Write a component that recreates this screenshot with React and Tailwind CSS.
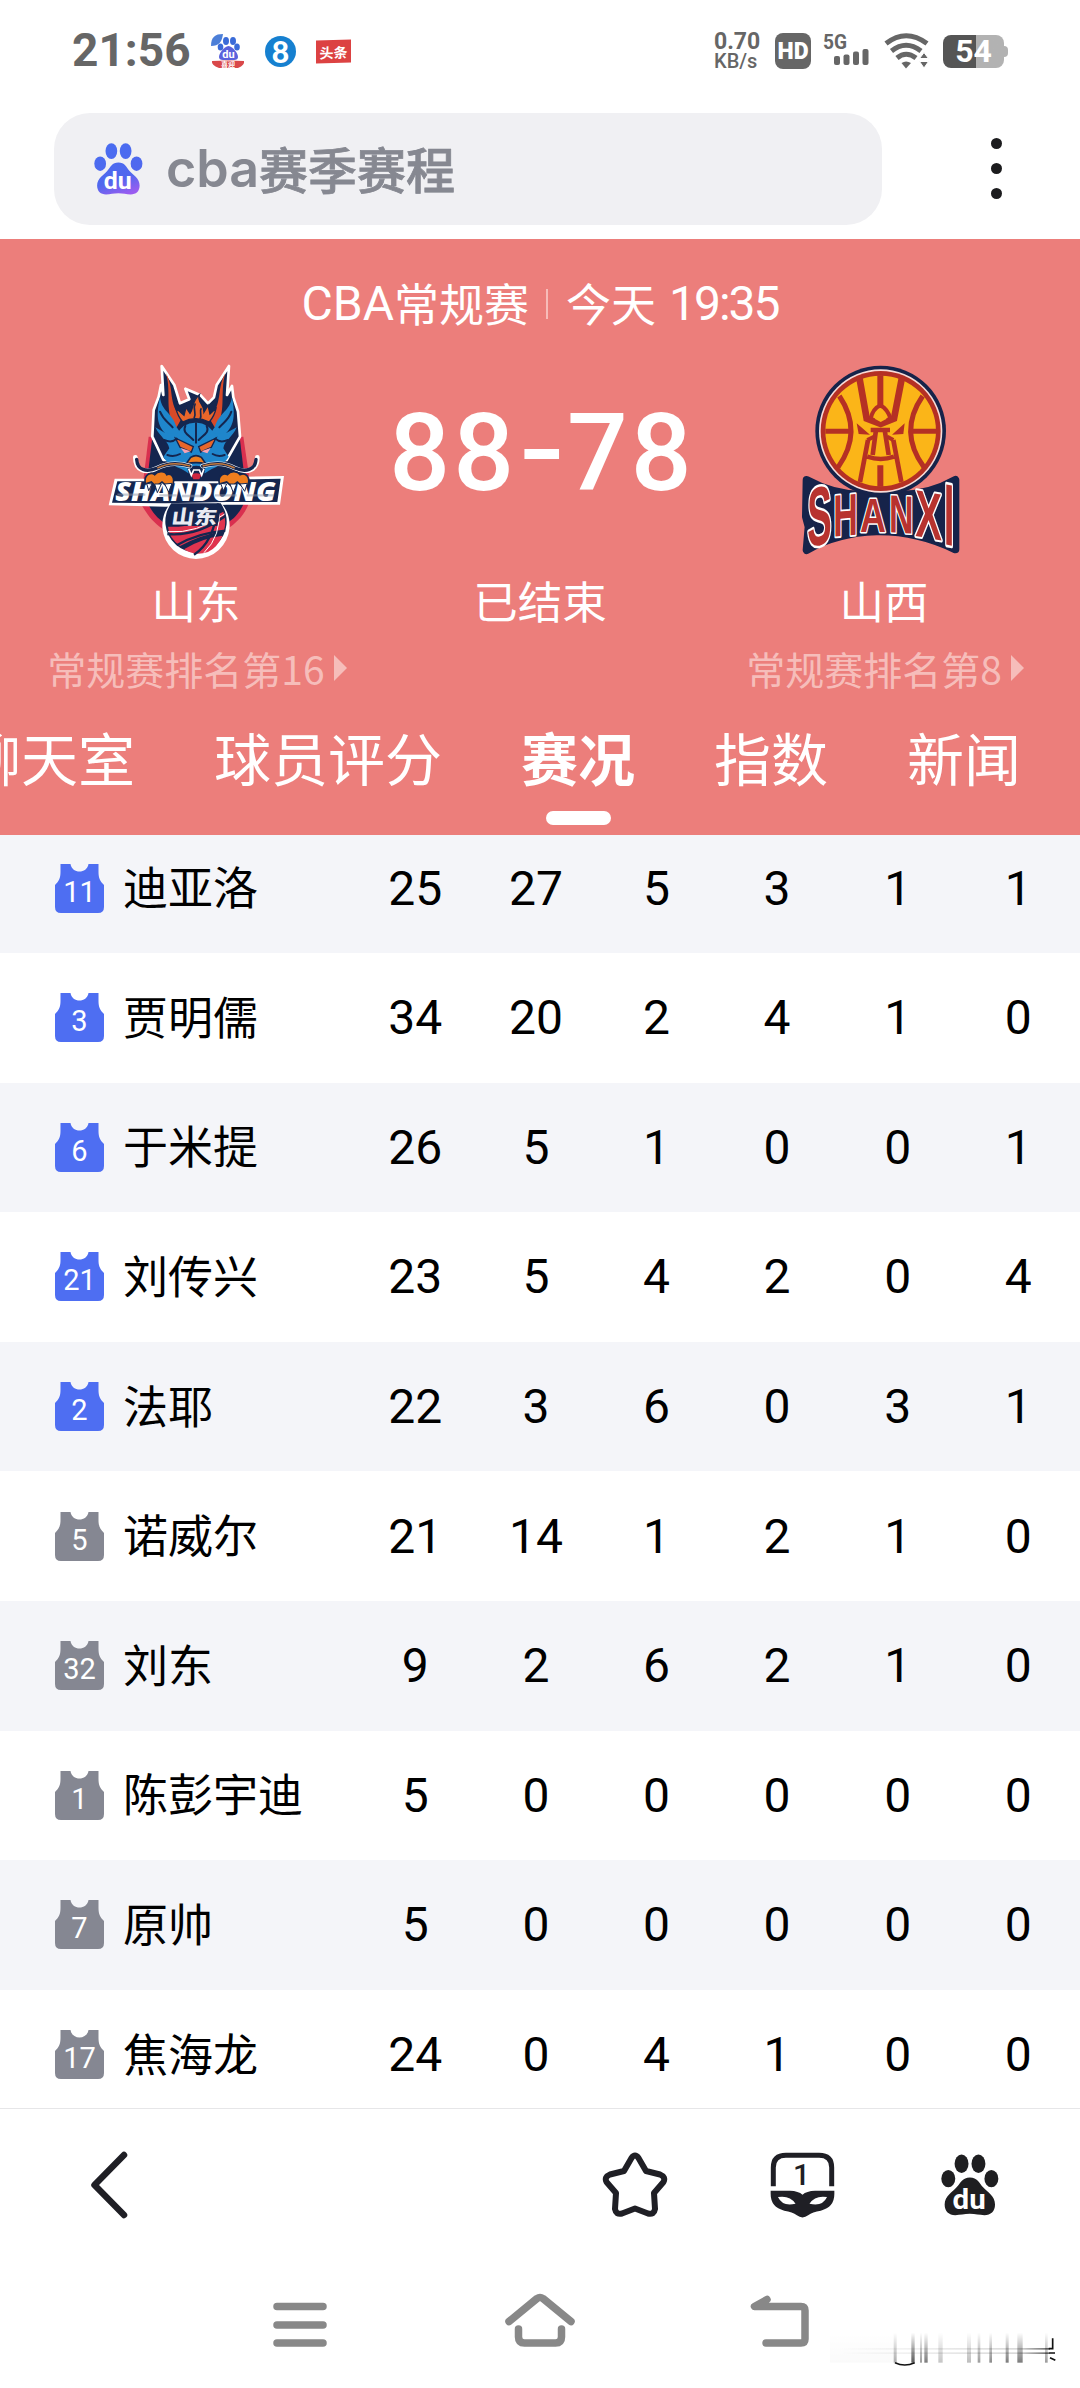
const players = [
	{ number: 11, name: "迪亚洛", starter: true, stats: [25, 27, 5, 3, 1, 1] },
	{ number: 3, name: "贾明儒", starter: true, stats: [34, 20, 2, 4, 1, 0] },
	{ number: 6, name: "于米提", starter: true, stats: [26, 5, 1, 0, 0, 1] },
	{ number: 21, name: "刘传兴", starter: true, stats: [23, 5, 4, 2, 0, 4] },
	{ number: 2, name: "法耶", starter: true, stats: [22, 3, 6, 0, 3, 1] },
	{ number: 5, name: "诺威尔", starter: false, stats: [21, 14, 1, 2, 1, 0] },
	{ number: 32, name: "刘东", starter: false, stats: [9, 2, 6, 2, 1, 0] },
	{ number: 1, name: "陈彭宇迪", starter: false, stats: [5, 0, 0, 0, 0, 0] },
	{ number: 7, name: "原帅", starter: false, stats: [5, 0, 0, 0, 0, 0] },
	{ number: 17, name: "焦海龙", starter: false, stats: [24, 0, 4, 1, 0, 0] },
];

const tabs = ["聊天室", "球员评分", "赛况", "指数", "新闻"];

const Paw = ({ className, fill, textFill }) => (
	<svg className={className} viewBox="545 42 175 186" fill={fill}>
		<defs>
			<linearGradient id="paw" gradientUnits="userSpaceOnUse" x1="600" y1="60" x2="660" y2="226">
				<stop offset="0" stopColor="#4a6cf0" />
				<stop offset="0.65" stopColor="#5068ee" />
				<stop offset="1" stopColor="#9a5cf0" />
			</linearGradient>
		</defs>
		<ellipse cx="607" cy="71" rx="21" ry="28" />
		<ellipse cx="658" cy="71" rx="21" ry="28" />
		<ellipse cx="567" cy="116" rx="21" ry="26" />
		<ellipse cx="697" cy="116" rx="21" ry="26" />
		<path d="M632 112C655 112 660 128 672 142C685 157 708 168 708 194C708 215 695 226 676 226C660 226 650 222 632 222C614 222 604 226 588 226C569 226 556 215 556 194C556 168 580 157 592 142C604 128 610 112 632 112Z" />
		<text x="630" y="207" fontSize="86" fontWeight="700" textAnchor="middle" textLength="100" lengthAdjust="spacingAndGlyphs" fill={textFill} fontFamily="Roboto, sans-serif">du</text>
	</svg>
);

const ShandongLogo = () => (
	<svg className="mr-1 h-[240px] w-[230px]" viewBox="0 0 690 720">
		<path d="M206 290H490L506 400L512 470C500 520 475 545 440 568H250C215 545 195 515 182 488L190 420Z" fill="#d9304f" />
		<path d="M216 300H480L492 400L496 480C480 520 460 540 430 555H262C230 535 210 510 200 480L204 400Z" fill="#14264f" />
		{/* mane */}
		<path d="M245 78L283 135L300 190L328 178L316 146L362 166L384 190L402 172L410 135L447 78L441 165L456 138L460 172L474 215L480 290L440 360H250L217 290L221 210L236 170L243 135L250 165Z" fill="#14264f" stroke="#fff" strokeWidth="8" strokeLinejoin="round" />
		<path d="M258 100C285 150 262 190 305 235L290 262C250 225 276 160 258 100Z" fill="#d84a28" />
		<path d="M436 100C408 150 430 190 388 235L404 262C442 225 418 160 436 100Z" fill="#d84a28" />
		<path d="M240 170C244 215 276 215 290 262L310 290L262 286C234 260 226 235 240 170Z" fill="#1f86cc" />
		<path d="M456 170C450 215 418 215 404 262L384 290L432 286C460 260 468 235 456 170Z" fill="#1f86cc" />
		<path d="M226 262C240 292 262 300 268 325L250 350C262 378 300 378 325 400H375C402 378 432 378 446 350L430 325C434 300 458 292 470 262L440 278L405 282Q380 246 348 248Q312 246 290 282L254 278Z" fill="#1f86cc" />
		<path d="M288 205C292 226 300 236 308 246Q346 226 388 246C396 236 404 226 408 205L390 222L384 196L372 216C372 190 350 188 358 164C336 182 342 202 330 220L318 202L312 226Z" fill="#e8662a" stroke="#14264f" strokeWidth="4" />
		<path d="M346 190C336 208 352 216 342 236M364 205C356 216 368 224 360 238" fill="none" stroke="#14264f" strokeWidth="5" />
		<path d="M348 250V308M316 258C306 278 326 285 340 300M380 258C390 278 370 285 356 300M240 215C250 240 262 244 278 262M454 215C446 240 434 244 418 262M252 300Q276 310 290 296M444 300Q420 310 406 296M262 345Q282 352 300 342M434 345Q414 352 398 342" fill="none" stroke="#14264f" strokeWidth="6" strokeLinecap="round" />
		<path d="M286 294L340 320L334 336L300 322ZM408 294L356 320L362 336L394 322Z" fill="#e8662a" stroke="#14264f" strokeWidth="4" />
		<path d="M302 324L332 334L314 340ZM392 324L364 334L382 340Z" fill="#f6a3b4" />
		<path d="M332 352Q348 342 364 352L378 372Q348 364 318 372Z" fill="#ee7d1e" stroke="#14264f" strokeWidth="5" />
		<path d="M322 382Q348 372 376 382L370 422H330Z" fill="#14264f" />
		<path d="M334 404Q349 396 364 404L358 418H340Z" fill="#cf2740" />
		<path d="M326 386L334 406L341 390H358L365 406L372 386" fill="none" stroke="#fff" strokeWidth="5" />
		{/* whiskers */}
		<path d="M166 352C166 392 196 402 232 384C270 366 300 370 330 378M532 352C532 392 500 402 464 384C428 366 398 370 368 378" fill="none" stroke="#fff" strokeWidth="14" strokeLinecap="round" />
		<path d="M170 358C172 390 198 398 232 384C270 366 300 370 330 378M528 358C526 390 498 398 464 384C428 366 398 370 368 378" fill="none" stroke="#14264f" strokeWidth="10" strokeLinecap="round" />
		<path d="M232 384C270 366 300 370 330 378M464 384C428 366 398 370 368 378" fill="none" stroke="#c67a3c" strokeWidth="5" />
		{/* wordmark */}
		<path d="M104 416H202L230 424H470L500 410L612 408L600 494H440L256 500L86 496Z" fill="#fff" />
		<path d="M112 424H200L230 430H470L502 418L602 416L592 486H440L256 490L96 488Z" fill="#14264f" />
		<text x="347" y="483" textAnchor="middle" textLength="482" lengthAdjust="spacingAndGlyphs" fontSize="77" fontStyle="italic" fontWeight="800" fill="#fff" fontFamily="Open Sans, sans-serif">SHANDONG</text>
		<path d="M112 464H196M238 466H290M306 468H370M405 466H470M500 466H582" stroke="#8f96a8" strokeWidth="7" opacity="0.5" />
		<g fill="#ee7d1e" stroke="#14264f" strokeWidth="5">
			<path d="M196 432C190 400 216 396 224 404C234 390 258 394 260 404C276 398 286 414 278 436L262 440L246 426L228 440L214 426Z" />
			<path d="M418 432C412 404 434 398 442 404C452 390 474 394 480 404C498 396 512 412 504 436L488 440L472 426L456 440L440 426Z" />
		</g>
		<path d="M200 430L206 452L216 432ZM224 432L232 458L244 432ZM254 432L266 456L276 430ZM422 430L430 452L440 432ZM450 432L460 458L470 432ZM480 432L494 454L502 430Z" fill="#fff" stroke="#14264f" strokeWidth="3" />
		{/* ball */}
		<path d="M268 494A101 101 0 1 0 428 494Z" fill="#fff" />
		<path d="M274 490A92 92 0 1 0 422 490Z" fill="#14264f" />
		<path d="M264 560Q340 565 430 515Q440 545 432 572Q360 585 300 618Q266 592 264 560Z" fill="#e0344f" />
		<path d="M312 628Q365 594 428 587Q412 622 384 636Q345 650 312 628Z" fill="#e0344f" />
		<path d="M262 582Q350 590 436 528M290 616Q356 578 436 572M342 644Q405 604 414 490" fill="none" stroke="#14264f" strokeWidth="7" />
		<path d="M264 575Q350 582 434 522M418 500Q424 590 372 638" fill="none" stroke="#fff" strokeWidth="3" />
		<path d="M272 498H424L412 558H264Z" fill="#14264f" />
		<text x="342" y="551" textAnchor="middle" textLength="136" lengthAdjust="spacingAndGlyphs" fontSize="58" fontWeight="900" fill="#e9ebf2" transform="skewX(-8) translate(76 0)" fontFamily="Noto Sans CJK SC, sans-serif">山东</text>
	</svg>
);

const ShanxiLogo = () => (
	<svg className="h-[240px] w-[230px]" viewBox="0 0 690 720">
		<path d="M110 420Q220 480 332 458Q450 480 556 420V628Q440 572 320 574Q200 578 110 630L116 560L108 530Z" fill="#16234a" stroke="#16234a" strokeWidth="24" strokeLinejoin="round" />
		<circle cx="332" cy="273" r="196" fill="#16234a" />
		<circle cx="332" cy="273" r="185" fill="#f8dcd8" />
		<circle cx="332" cy="273" r="180" fill="#b53024" />
		<circle cx="332" cy="273" r="166" fill="#fbb518" />
		<g fill="none" stroke="#b53024" strokeWidth="15">
			<path d="M208 168Q280 275 204 382M458 168Q384 275 462 382M166 274H244M420 274H498" />
			<path d="M268 112L290 236L332 252L372 236L396 112" strokeWidth="20" />
			<path d="M331 106V204M331 376V440" strokeWidth="18" />
			<path d="M331 196Q308 206 302 236M331 196Q352 206 362 236" strokeWidth="12" />
			<path d="M270 426L294 300M394 426L370 300M292 350Q332 364 372 350M302 270H360M318 270L308 345M344 270L356 345" strokeWidth="14" />
			<path d="M292 300L312 290M370 300L352 290" strokeWidth="12" />
		</g>
		<path d="M332 218L350 236L332 246L314 236Z" fill="#fbb518" />
		<path d="M260 250L300 284L266 282ZM404 250L366 284L400 282Z" fill="#b53024" />
		{/* arched wordmark, outer letters taller than the middle ones */}
		<g fontFamily="Liberation Sans, Arial, sans-serif" fontWeight="700" fontSize="100" fill="#b8332f" stroke="#fff" strokeWidth="6" paintOrder="stroke" strokeLinejoin="round">
			<text transform="matrix(1.1 -0.22 0 2.5 112 622)">S</text>
			<text transform="matrix(1.02 -0.09 0 1.78 190 590)">H</text>
			<text transform="matrix(1.08 0 0 1.46 270 576)">A</text>
			<text transform="matrix(1.02 0.07 0 1.6 357 576)">N</text>
			<text transform="matrix(1.2 0.2 0 2 436 588)">X</text>
			<text transform="matrix(1.15 0.24 0 2.62 521 612)">I</text>
		</g>
	</svg>
);

const StatusBar = () => (
	<div className="flex h-[103px] items-center justify-between px-[72px] pb-px text-[#666]">
		<div className="flex items-center">
			<span className="mb-[2px] w-[118px] whitespace-nowrap font-[Roboto] text-[46px] font-bold leading-none">21:56</span>
			<svg className="ml-5 h-[36px] w-[36px]" viewBox="0 0 36 36">
				<path d="M1 13C1 4 5 1 13 1C12 9 9 13 1 13Z" fill="#4c7fd8" />
				<g fill="#3a6bd8">
					<ellipse cx="16" cy="8" rx="3" ry="4" />
					<ellipse cx="23" cy="8" rx="3" ry="4" />
					<ellipse cx="10.500" cy="14" rx="2.800" ry="3.500" />
					<ellipse cx="27" cy="14" rx="2.800" ry="3.500" />
					<path d="M18.500 13C23 14 28 20 28 24Q28 27 24 27H13Q9 27 9 24C9 20 14 14 18.500 13Z" fill="#5a62dc" />
				</g>
				<text x="18.500" y="25" fontSize="11" fontWeight="700" textAnchor="middle" fill="#fff" fontFamily="Roboto, sans-serif">du</text>
				<path d="M2 28Q18 27 34 28Q35 32 28 35H9Q1 32 2 28Z" fill="#d9484a" />
				<text x="18" y="34" fontSize="7" fontWeight="700" textAnchor="middle" fill="#fff" fontFamily="Noto Sans CJK SC, sans-serif">喜迎</text>
			</svg>
			<div className="ml-[19px] flex h-[31px] w-[31px] items-center justify-center rounded-full bg-[#1680d0] font-[Lato] text-[30px] font-black leading-none text-white">8</div>
			<div className="ml-5 flex h-[23px] w-[35px] -skew-y-2 items-center justify-center bg-[#dc4242] font-['Noto_Sans_CJK_SC'] text-[14px] font-bold leading-none text-white">头条</div>
		</div>
		<div className="flex items-center">
			<div className="flex w-[47px] flex-col font-[Roboto] font-bold">
				<span className="text-[23px] leading-[20px]">0.70</span>
				<span className="text-[20px] font-medium leading-[18px]">KB/s</span>
			</div>
			<div className="ml-[14px] flex h-[36px] w-[36px] items-center justify-center rounded-lg bg-[#666] font-[Roboto] text-[23px] font-black leading-none text-white">HD</div>
			<svg className="ml-3 h-[36px] w-[47px] overflow-visible" viewBox="0 0 47 36">
				<text x="0" y="16" fontSize="21" fontWeight="700" textLength="24" lengthAdjust="spacingAndGlyphs" fill="#666" fontFamily="Roboto, sans-serif">5G</text>
				<rect x="11" y="23" width="6" height="9" rx="2" fill="#666" />
				<rect x="20.500" y="21.500" width="6" height="10.500" rx="2" fill="#666" />
				<rect x="30" y="18.500" width="6" height="13.500" rx="2" fill="#666" />
				<rect x="39.500" y="16" width="6" height="16" rx="2" fill="#666" />
			</svg>
			<svg className="ml-[14px] h-[36px] w-[46px]" viewBox="0 0 46 36" fill="none" stroke="#666" strokeWidth="5">
				<path d="M2 10.500Q22 -5 43 10.500" />
				<path d="M7.500 18Q22 6.500 37 18" />
				<path d="M13 25Q22 17.500 32 25" />
				<path d="M17.500 30Q22 27 27 30L22 35.500Z" fill="#666" stroke="none" />
				<path d="M40 19.500L44.500 25.500H35.500ZM40 35L44.500 28.500H35.500Z" fill="#666" stroke="#fff" strokeWidth="1" />
			</svg>
			<div className="ml-[13px] flex items-center">
				<div className="flex h-[33px] w-[61px] items-center justify-center rounded-lg bg-linear-to-r from-[#555] from-54% to-[#b2b2b2] to-54% font-[Roboto] text-[32px] font-bold leading-none text-white">54</div>
				<div className="h-[11px] w-[4px] rounded-r-sm bg-[#b2b2b2]" />
			</div>
		</div>
	</div>
);

const SearchBar = () => (
	<div className="flex h-[136px] pl-[54px] pt-[10px]">
		<div className="flex h-[112px] w-[828px] items-center rounded-[36px] bg-[#f0f0f3] pl-[40px] text-[#868891]">
			<Paw className="h-[52px] w-[49px]" fill="url(#paw)" textFill="#fff" />
			<div className="ml-[23px] flex items-center whitespace-nowrap font-medium leading-none">
				<span className="font-[Inter] text-[52px] font-semibold">cba</span>
				<span className="mb-[4px] font-['Noto_Sans_CJK_SC'] text-[49px] [-webkit-text-stroke:0.8px]">赛季赛程</span>
			</div>
		</div>
		<div className="ml-[109px] mt-[25px] flex flex-col gap-[14px]">
			<div className="h-[11px] w-[11px] rounded-full bg-[#1c1c1e]" />
			<div className="h-[11px] w-[11px] rounded-full bg-[#1c1c1e]" />
			<div className="h-[11px] w-[11px] rounded-full bg-[#1c1c1e]" />
		</div>
	</div>
);

const Team = ({ logo, name, rank, className }) => (
	<div className={className}>
		{logo}
		<div className="-mt-[3px] mr-[2px] text-[44.5px] leading-[46px]">{name}</div>
		<div className="mt-[15px] flex h-[60px] items-center gap-[9px] whitespace-nowrap text-[39px] leading-none text-[#f6bdba]">
			<span>{rank}</span>
			<svg className="h-[26px] w-[13px]" viewBox="0 0 13 26" fill="currentColor">
				<path d="M0 0L13 13L0 26Z" />
			</svg>
		</div>
	</div>
);

const MatchHeader = () => (
	<header className="h-[596px] overflow-hidden bg-[#ec7e7b] font-['Noto_Sans_CJK_SC'] text-white">
		<div className="flex h-[101px] items-center justify-center pt-[29px] text-[45px] leading-none">
			<span className="font-[Roboto] text-[48px]">CBA</span>
			<span className="mb-[3px]">常规赛</span>
			<div className="ml-[17px] mr-[18px] h-[30px] w-[2px] bg-[#f7bcb9]" />
			<span className="mb-[3px]">今天</span>
			<span className="ml-[13px] font-[Roboto] text-[48px] tracking-[-2px]">19:35</span>
		</div>
		<div className="flex h-[360px]">
			<Team className="flex w-[394px] flex-col items-center" logo={<ShandongLogo />} name="山东" rank="常规赛排名第16" />
			<div className="flex w-[296px] flex-col items-center">
				<div className="flex h-[240px] items-center whitespace-nowrap pb-[13px] font-[Roboto] text-[107px] font-medium leading-none">
					<span className="tracking-[3px]">88</span>
					<span className="mb-[6px] inline-block w-[50px] scale-x-125 text-center">-</span>
					<span className="tracking-[3px]">78</span>
				</div>
				<div className="-mt-[3px] mr-[4px] text-[44.5px] leading-[46px]">已结束</div>
			</div>
			<Team className="flex w-[390px] flex-col items-center" logo={<ShanxiLogo />} name="山西" rank="常规赛排名第8" />
		</div>
		<nav className="-ml-[36px] flex gap-[79px] whitespace-nowrap pt-[21px] text-[57px] leading-[70px]">
			{tabs.map((tab) => (
				<div key={tab} className="flex flex-col items-center">
					<span className={tab === "赛况" ? "font-bold" : ""}>{tab}</span>
					{tab === "赛况" && <div className="mt-[20px] h-[14px] w-[65px] rounded-full bg-white" />}
				</div>
			))}
		</nav>
	</header>
);

const Jersey = ({ number, starter }) => (
	<svg className="h-[49px] w-[49px]" viewBox="0 0 49 49">
		<path d="M5.500 0H15.500C17 10 32 10 33.500 0H43.500V8C43.500 14 45 17 49 21V43Q49 49 43 49H6Q0 49 0 43V21C4 17 5.500 14 5.500 8Z" fill={starter ? "#4e6ef2" : "#858792"} />
		<text x="24.500" y="38" fontSize="29" textAnchor="middle" fill="#fff" fontFamily="Roboto, sans-serif">{number}</text>
	</svg>
);

const PlayerRow = ({ player }) => (
	<div className="flex h-[129.6px] shrink-0 items-center pl-[55px] text-black odd:bg-[#f4f5f9]">
		<Jersey number={player.number} starter={player.starter} />
		<div className="mb-[5px] ml-[19px] w-[232px] whitespace-nowrap font-['Noto_Sans_CJK_SC'] text-[45px] leading-none">{player.name}</div>
		{player.stats.map((value, i) => (
			<div key={i} className="mt-px w-[120.6px] shrink-0 text-center font-[Roboto] text-[48px] leading-none">{value}</div>
		))}
	</div>
);

const ToolBar = () => (
	<div className="flex h-[154px] items-center border-t-[1.5px] border-[#e6e6e8] pb-[2px] pl-[88px]">
		<svg className="h-[70px] w-[42px]" viewBox="0 0 42 70" fill="none" stroke="#1f1f25" strokeWidth="6.500" strokeLinecap="round" strokeLinejoin="round">
			<path d="M36 5L6.500 35L36 65" />
		</svg>
		<svg className="ml-[472px] h-[66px] w-[66px]" viewBox="0 0 66 66" fill="none" stroke="#1f1f25" strokeWidth="6" strokeLinejoin="round">
			<path d="M29.500 6Q33 1 36.500 6L44 19L58 22.500Q64 25 61.500 30L52 41L53 57Q52 63 46 61.500L33 56.500L20 61.500Q14 63 13 57L14 41L4.500 30Q2 25 8 22.500L22 19Z" />
		</svg>
		<svg className="ml-[101px] h-[68px] w-[67px]" viewBox="30 35 200 205" fill="#1f1f25">
			<path d="M42 141V85Q42 48 80 48H180Q218 48 218 85V141" fill="none" stroke="#1f1f25" strokeWidth="15" />
			<text x="127" y="139" fontSize="90" fontWeight="500" textAnchor="middle" fontFamily="Roboto, sans-serif">1</text>
			<path d="M34 155H92Q118 156 130 167Q142 156 168 155H226V165Q226 205 185 215Q160 219 147 229Q130 242 113 229Q100 219 75 215Q34 205 34 165Z" />
			<path d="M56 174Q92 168 109 194Q70 204 56 174ZM204 174Q168 168 151 194Q190 204 204 174Z" fill="#fff" />
		</svg>
		<Paw className="ml-[105px] h-[62px] w-[58px]" fill="#1f1f21" textFill="#fff" />
	</div>
);

const SystemNav = () => (
	<div className="relative flex h-[126px] pl-[273px] pt-[35px]">
		<svg className="h-[56px] w-[54px]" viewBox="0 0 54 56" fill="none" stroke="#888" strokeWidth="7.500" strokeLinecap="round">
			<path d="M4 9.500H50M4 28H50M4 46H50" />
		</svg>
		<svg className="ml-[177px] h-[56px] w-[72px] overflow-visible" viewBox="0 0 72 56" fill="none" stroke="#888" strokeWidth="7.500" strokeLinecap="round" strokeLinejoin="round">
			<path d="M5 24.500L33 1.500Q36 -0.500 39 1.500L67 24.500M14.500 32V40Q14.500 46 20.500 46H51.500Q57.500 46 57.500 40V32" />
		</svg>
		<svg className="ml-[174px] h-[56px] w-[60px] overflow-visible" viewBox="0 0 60 56" fill="none" stroke="#888" strokeWidth="7.500" strokeLinecap="round" strokeLinejoin="round">
			<path d="M17 2.500L4.500 9.500H51Q55 9.500 55 13.500V42Q55 46 51 46H16" />
		</svg>
		<svg className="absolute right-[10px] bottom-[8px] h-[60px] w-[250px]" viewBox="0 0 750 180">
			<defs>
				<linearGradient id="fall" x1="0" y1="0" x2="0" y2="1">
					<stop offset="0" stopColor="#000" stopOpacity="0" />
					<stop offset="1" stopColor="#000" stopOpacity="0.65" />
				</linearGradient>
				<linearGradient id="streak" gradientUnits="userSpaceOnUse" x1="60" y1="0" x2="690" y2="0">
					<stop offset="0" stopColor="#000" stopOpacity="0" />
					<stop offset="0.85" stopColor="#000" stopOpacity="0.15" />
					<stop offset="1" stopColor="#000" stopOpacity="0.6" />
				</linearGradient>
			</defs>
			<g fill="url(#fall)">
				<rect x="221" y="38" width="9" height="90" opacity="0.5" />
				<rect x="274" y="38" width="10" height="90" />
				<rect x="300" y="38" width="6" height="90" opacity="0.6" />
				<rect x="313" y="38" width="10" height="90" opacity="0.8" />
				<rect x="355" y="38" width="13" height="90" opacity="0.35" />
				<rect x="441" y="38" width="12" height="90" opacity="0.4" />
				<rect x="473" y="38" width="8" height="90" opacity="0.6" />
				<rect x="508" y="38" width="8" height="90" opacity="0.7" />
				<rect x="557" y="38" width="9" height="90" opacity="0.8" />
				<rect x="592" y="38" width="16" height="90" opacity="0.8" />
				<rect x="675" y="38" width="8" height="90" opacity="0.6" />
				<rect x="30" y="38" width="190" height="90" opacity="0.03" />
			</g>
			<rect x="60" y="84" width="630" height="5" fill="url(#streak)" />
			<rect x="60" y="97" width="630" height="5" fill="url(#streak)" />
			<path d="M225 128Q254 142 284 128" fill="none" stroke="#111" strokeWidth="5" />
			<path d="M698 55V86H686M688 99H705M690 113L706 121" fill="none" stroke="#111" strokeWidth="5" />
		</svg>
	</div>
);

const App = () => {
	return (
		<div className="flex h-[2388px] w-[1080px] flex-col overflow-hidden bg-white">
			<StatusBar />
			<SearchBar />
			<MatchHeader />
			<main className="flex h-[1273px] flex-col overflow-hidden">
				<div className="-mt-[11.600px] flex flex-col">
					{players.map((player) => (
						<PlayerRow key={player.number} player={player} />
					))}
				</div>
			</main>
			<ToolBar />
			<SystemNav />
		</div>
	);
};

export default App;
